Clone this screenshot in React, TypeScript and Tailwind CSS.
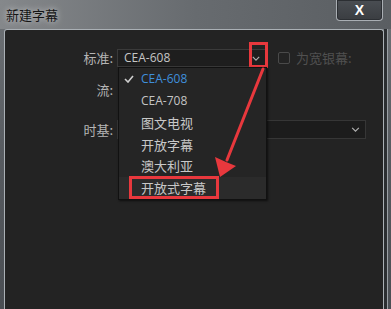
import React from 'react';

const cjk = "font-['Noto_Sans_CJK_SC','Noto_Sans',sans-serif]";

const items = ['CEA-608', 'CEA-708', '图文电视', '开放字幕', '澳大利亚', '开放式字幕'];

function Chevron({ className }: { className?: string }) {
  return (
    <svg viewBox="0 0 10 6" className={className} fill="none" stroke="currentColor" strokeWidth="1.4">
      <path d="M1 1 L5 5 L9 1" />
    </svg>
  );
}

export default function App() {
  return (
    <div className={`relative w-[391px] h-[309px] overflow-hidden flex flex-col bg-gradient-to-b from-[#6f7377] via-[#575b60] to-[#4a4e53] ${cjk}`}>
      {/* Title bar */}
      <div className="h-[29px] flex items-start justify-between bg-gradient-to-r from-[#85888b] via-[#676b6f] to-[#5a5e62]">
        <span className="ml-[6px] mt-[6px] text-[13px] leading-[18px] text-[#141414] [text-shadow:0_0_6px_rgba(255,255,255,0.7)]">
          新建字幕
        </span>
        <div className="mr-[8px] w-[47px] h-[21px] rounded-b-[4px] border border-t-0 border-[#a9aeb3] bg-gradient-to-b from-[#4a4e53] to-[#3a3d41] flex items-center justify-center shadow-[inset_0_0_0_1px_#2c2f33]">
          <span className="text-white text-[14px] font-bold leading-none font-['Liberation_Sans',sans-serif]">X</span>
        </div>
      </div>

      {/* Body */}
      <div className="flex-1 flex ml-[4px] mr-[3px]">
        <div className="relative flex-1 border-l border-t border-r border-[#aab0b5] rounded-tl-[3px] rounded-tr-[3px] bg-[#232323] pt-[19px]">
          {/* Row 1 */}
          <div className="flex items-center h-[18px]">
            <span className="w-[108px] text-right text-[13px] text-[#b5b5b5]">标准:</span>
            <div className="ml-[4px] w-[150px] h-[18px] border border-[#3a3a3a] bg-[#1e1e1e] flex items-center justify-between px-[6px]">
              <span className="text-[12px] text-[#c6c6c6] font-['Open_Sans',sans-serif]">CEA-608</span>
              <Chevron className="w-[8px] h-[5px] text-[#b0b0b0]" />
            </div>
            <div className="ml-[11px] w-[12px] h-[12px] border border-[#4a4a4a] rounded-[2px]" />
            <span className="ml-[6px] text-[13px] text-[#505050]">为宽银幕:</span>
          </div>

          {/* Row 2 */}
          <div className="flex items-center h-[18px] mt-[14px]">
            <span className="w-[108px] text-right text-[13px] text-[#b5b5b5]">流:</span>
          </div>

          {/* Row 3 */}
          <div className="flex items-center h-[19px] mt-[21px]">
            <span className="w-[108px] text-right text-[13px] text-[#b5b5b5]">时基:</span>
            <div className="ml-[4px] w-[249px] h-[19px] border border-[#363636] bg-[#1c1c1c] flex items-center justify-end pr-[5px]">
              <Chevron className="w-[9px] h-[5px] text-[#b0b0b0]" />
            </div>
          </div>

          {/* Red box on chevron */}
          <div className="absolute left-[244px] top-[12px] w-[19px] h-[26px] border-[3px] border-[#e8383d]" />

          {/* Dropdown list */}
          <div className="absolute left-[113px] top-[37px] w-[149px] h-[133px] border border-[#111] bg-[#252525] shadow-[1px_1px_2px_rgba(0,0,0,0.6)] flex flex-col">
            {items.map((t, i) => (
              <div
                key={t}
                className={`relative h-[22px] flex items-center pl-[22px] ${i === 5 ? 'bg-[#2b2b2b]' : ''}`}
              >
                {i === 0 && (
                  <svg viewBox="0 0 10 8" className="absolute left-[5px] top-[7px] w-[10px] h-[8px]" fill="none" stroke="#cfcfcf" strokeWidth="1.6">
                    <path d="M1 4 L4 7 L9 1" />
                  </svg>
                )}
                <span
                  className={
                    i < 2
                      ? `text-[12px] font-['Open_Sans',sans-serif] ${i === 0 ? 'text-[#3f8fdc]' : 'text-[#c4c4c4]'}`
                      : 'text-[13px] text-[#c8c8c8]'
                  }
                >
                  {t}
                </span>
              </div>
            ))}
            <div className="absolute left-[10px] top-[108px] w-[90px] h-[23px] border-[3px] border-[#e8383d]" />
          </div>
        </div>
        <div className="w-[4px] bg-[#2b2e31] border-r border-[#9aa0a5]" />
      </div>

      {/* Red arrow */}
      <svg className="absolute left-0 top-0 w-[391px] h-[309px] pointer-events-none" viewBox="0 0 391 309">
        <line x1="263" y1="69" x2="227" y2="160" stroke="#e8383d" strokeWidth="3" strokeLinecap="round" />
        <polygon points="220,177 215,157 226,162 236,166" fill="#e8383d" />
      </svg>
    </div>
  );
}
